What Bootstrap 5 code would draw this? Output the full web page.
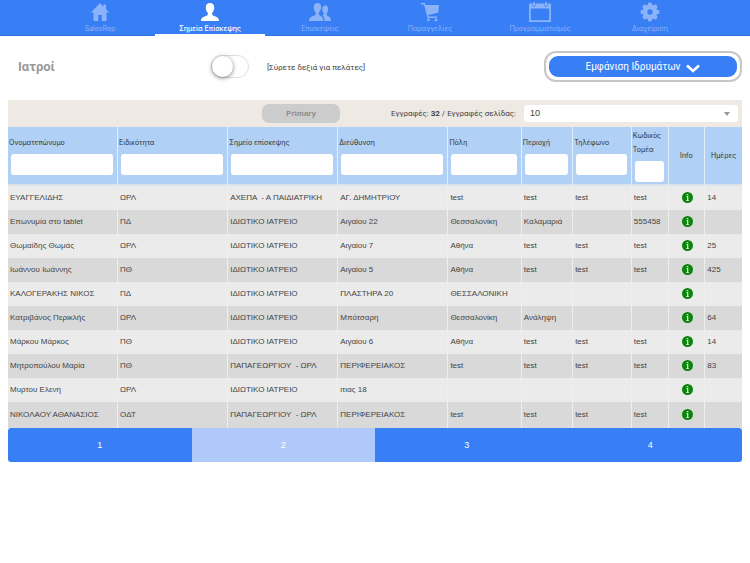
<!DOCTYPE html>
<html lang="el">
<head>
<meta charset="utf-8">
<meta name="viewport" content="width=device-width, initial-scale=1">
<title>Σημεία Επίσκεψης</title>
<link href="https://cdn.jsdelivr.net/npm/bootstrap@5.3.0/dist/css/bootstrap.min.css" rel="stylesheet">
<style>
:root { --brand: #387ef5; --brand-soft: #afc9fa; }
body { font-family: "Liberation Sans", Arial, sans-serif; font-size: 8px; line-height: 12px; color: #444; background: #fff; }
.tabs-bar { background: var(--brand); padding: 0 6%; border-bottom: 1px solid #3272dd; }
.tab-item { flex: 1 1 0; height: 36px; margin-bottom: -1px; padding-top: 2px; color: #8bb3f9; text-decoration: none; font-family: Inter, sans-serif; font-size: 7px; line-height: 10px; white-space: nowrap; border-bottom: 2px solid transparent; }
.tab-item svg { width: 22px; height: 20px; fill: currentColor; margin-bottom: 2px; }
.tab-item.active { color: #fff; font-weight: 500; border-color: #fff; }
.head-row { padding: 15px 4px 0 18px; height: 64px; }
.page-title { font-family: Roboto, sans-serif; font-size: 13px; line-height: 18px; font-weight: 700; color: #999; width: 193px; }
.switch-box.form-check-input { width: 38px; height: 23px; margin: 0; border: 1px solid #ddd; background-color: #fff; background-image: none; position: relative; box-shadow: none; border-radius: 12px; appearance: none; }
.switch-box::before { content: ""; display: block; width: 21px; height: 21px; border-radius: 50%; background: #fff; box-shadow: 0 1px 4px rgba(0,0,0,.5); transition: margin .2s; }
.switch-box:checked::before { margin-left: 15px; }
.switch-label { font-family: Roboto, sans-serif; font-size: 8px; line-height: 14px; margin: 2px 0 0 18px; }
.show-btn { width: 198px; height: 31px; border: 2px solid #c9c5c5; border-radius: 12px; padding: 3px; background: #fff; }
.show-btn span { height: 21px; background: var(--brand); border-radius: 9px; color: #fff; font-family: Roboto, sans-serif; font-size: 10px; font-weight: 400; line-height: 25px; gap: 6px; }
.show-btn svg { width: 14px; height: 9px; margin-top: 4px; }
.toolbar-row { background: #eee9e3; height: 27px; padding: 0 4px 0 254px; }
.primary-btn { width: 78px; height: 19px; border: 0; border-radius: 7px; background: #ccc; color: #8c8c8c; font-size: 8px; font-weight: 700; }
.count-label { font-family: Roboto, sans-serif; font-size: 8px; }
.size-select.form-select { width: 214px; height: 17px; min-height: 0; padding: 0 6px; border: 0; border-radius: 3px; font-size: 9px; line-height: 17px; color: #444; background: #fff url("data:image/svg+xml,%3Csvg xmlns='http://www.w3.org/2000/svg' viewBox='0 0 6 4'%3E%3Cpath d='M0 0h6L3 4z' fill='%23999'/%3E%3C/svg%3E") no-repeat right 8px center / 6px 4px; }
.grid-table { table-layout: fixed; width: 100%; margin: 0; border-collapse: separate; border-spacing: 0; }
.grid-table th { background: #b0d1f5; font-family: Inter, sans-serif; font-weight: 400; font-size: 7px; line-height: 14px; height: 59px; padding: 0 3px 0 1px; color: #333; vertical-align: middle; border-right: 1px solid #e3eefa; border-bottom: 2px solid #dde3ea; }
.grid-table th:nth-child(n+9) { padding: 0; }
.grid-table th label { display: block; }
.input-wrap { padding: 4px 1px 0 2px; }
.grid-table th .form-control { height: 21px; min-height: 0; width: auto; min-width: 0; padding: 0 4px; border: 0; border-radius: 3px; font-size: 8px; }
.grid-table td { height: 24px; padding: 0 0 0 2px; vertical-align: middle; white-space: pre; border-right: 1px solid #eee; font-size: 8px; }
.grid-table tbody tr:nth-child(odd) { background: #ebebeb; }
.grid-table tbody tr:nth-child(even) { background: #d9d9d9; }
.grid-table tbody tr:last-child td { height: 26px; }
.grid-table th:last-child, .grid-table td:last-child { border-right: 0; }
.info-btn { border: 0; padding: 0; background: none; width: 11px; height: 11px; display: block; margin: 0 auto 2px; }
.info-btn svg { display: block; width: 11px; height: 11px; }
.pager { background: var(--brand); border-radius: 3px; overflow: hidden; }
.pager a { flex: 1 1 0; height: 34px; line-height: 35px; color: #fff; font-size: 9px; text-align: center; text-decoration: none; }
.pager a.current { background: var(--brand-soft); }
</style>
</head>
<body>
<svg class="d-none" aria-hidden="true">
  <symbol id="ico-info" viewBox="0 0 22 22"><circle cx="11" cy="11" r="11" fill="#0a850a"/><path fill="#fff" fill-opacity=".85" d="M9.600 3.800h3v2.800h-3zM8.800 8.200h3.800v7.800h1v1.800H8.600V16h1.400v-6H8.800z"/></symbol>
</svg>
<nav class="tabs-bar d-flex" aria-label="Κύρια πλοήγηση">
  <a class="tab-item d-flex flex-column align-items-center" href="#"><svg viewBox="0 0 22 20"><path d="M11 1 2 10.500h2.500V19h4.800v-6h3.400v6h4.800v-8.500H20l-3-3.200V2.500h-2.500v2.200z"/></svg>SalesRep</a>
  <a class="tab-item active d-flex flex-column align-items-center" href="#" aria-current="page"><svg viewBox="0 0 22 20"><path d="M11 1C8.300 1 6.800 2.700 6.800 5.500c0 2.500.9 4.300 2 5.300.3 1.500 0 2.400-1.300 3C4.500 15 2 15.200 2 19h18c0-3.800-2.500-4-5.500-5.200-1.300-.6-1.600-1.500-1.300-3 1.100-1 2-2.800 2-5.300C15.200 2.700 13.700 1 11 1z"/></svg>Σημεία Επίσκεψης</a>
  <a class="tab-item d-flex flex-column align-items-center" href="#"><svg viewBox="0 0 22 20"><path d="M8.500 1C6 1 4.800 2.600 4.800 5.200c0 2.400.8 4.200 1.800 5.200.3 1.500 0 2.500-1.300 3.100C2.500 14.700 0 15.300 0 19h14.300c0-3.700-1.600-4.500-3.400-5.500-1.100-.6-1.300-1.600-1-3.100 1-1 2.300-2.800 2.300-5.200C12.200 2.600 11 1 8.500 1z"/><path d="M16.200 3.500c-1.500 0-2.900.8-2.900 3.200 0 2 .6 3.500 1.500 4.400.2 1-.1 1.700-1.300 2.100 1.300 1 2 2.800 2 5.800H22c0-3-1.300-4-3-4.700-1.300-.6-1.500-1.700-1.200-3.200.9-.9 1.300-2.300 1.300-4.400 0-2.200-1.200-3.200-2.900-3.200z"/></svg>Επισκέψεις</a>
  <a class="tab-item d-flex flex-column align-items-center" href="#"><svg viewBox="0 0 22 20"><path d="M2 1h4l.8 2H20l-.8 7.800-10 2.300.5 1.400H18V16H8.500L5 2.500H2z"/><circle cx="9.500" cy="18" r="1.400"/><circle cx="17" cy="18" r="1.400"/></svg>Παραγγελίες</a>
  <a class="tab-item d-flex flex-column align-items-center" href="#"><svg viewBox="0 0 22 20"><path fill-rule="evenodd" d="M0 1.500h3.500v1.800a1.500 1.500 0 0 0 3 0V1.500h9v1.800a1.500 1.500 0 0 0 3 0V1.500H22V20H0zM1.800 6.500v11.700h18.400V6.500z"/><rect x="4" width="2" height="4" rx="1"/><rect x="16" width="2" height="4" rx="1"/></svg>Προγραμματισμός</a>
  <a class="tab-item d-flex flex-column align-items-center" href="#"><svg viewBox="0 0 22 20"><g transform="translate(11 10)"><path id="tooth" d="M-2.500-6-1.800-9.300h3.600L2.500-6z"/><use href="#tooth" transform="rotate(45)"/><use href="#tooth" transform="rotate(90)"/><use href="#tooth" transform="rotate(135)"/><use href="#tooth" transform="rotate(180)"/><use href="#tooth" transform="rotate(225)"/><use href="#tooth" transform="rotate(270)"/><use href="#tooth" transform="rotate(315)"/><path fill-rule="evenodd" d="M0-7.200A7.200 7.200 0 1 1 0 7.200 7.200 7.200 0 0 1 0-7.200zM0-2.700A2.700 2.700 0 1 0 0 2.700 2.700 2.700 0 0 0 0-2.700z"/></g></svg>Διαχείριση</a>
</nav>
<main>
  <div class="head-row d-flex align-items-start">
    <div class="d-flex align-items-center flex-grow-1 pt-1">
      <h1 class="page-title m-0">Ιατροί</h1>
      <input class="form-check-input switch-box" type="checkbox" role="switch" id="customers">
      <label class="switch-label" for="customers">[Σύρετε δεξιά για πελάτες]</label>
    </div>
    <button type="button" class="show-btn me-1"><span class="d-flex align-items-center justify-content-center">Εμφάνιση Ιδρυμάτων <svg viewBox="0 0 14 9" fill="none" stroke="#fff" stroke-width="2.600"><path d="m1 1.500 6 5.500 6-5.500"/></svg></span></button>
  </div>
  <div class="px-2">
    <div class="toolbar-row d-flex align-items-center justify-content-between">
      <button type="button" class="primary-btn">Primary</button>
      <div class="d-flex align-items-center gap-2"><label class="count-label" for="size">Εγγραφές: <b>32</b> / Εγγραφές σελίδας:</label>
      <select class="form-select size-select" id="size"><option>10</option><option>20</option><option>50</option></select></div>
    </div>
    <table class="grid-table">
      <colgroup><col style="width:15%"><col style="width:15%"><col style="width:15%"><col style="width:15%"><col style="width:10%"><col style="width:7%"><col style="width:8%"><col style="width:5%"><col style="width:5%"><col style="width:5%"></colgroup>
      <thead><tr id="heads"></tr></thead>
      <tbody id="rows"></tbody>
    </table>
    <nav class="pager d-flex" aria-label="Σελίδες"><a href="#">1</a><a href="#" class="current" aria-current="page">2</a><a href="#">3</a><a href="#">4</a></nav>
  </div>
</main>
<script src="https://cdn.jsdelivr.net/npm/bootstrap@5.3.0/dist/js/bootstrap.bundle.min.js"></script>
<script>
const heads = ['Ονοματεπώνυμο','Ειδικότητα','Σημείο επίσκεψης','Διεύθυνση','Πόλη','Περιοχή','Τηλέφωνο','Κωδικός Τομέα'];
document.getElementById('heads').innerHTML = heads.map((h, i) =>
  `<th scope="col"><label for="f${i}">${h}</label><div class="d-grid input-wrap"><input class="form-control" type="text" id="f${i}"></div></th>`).join('') +
  '<th scope="col" class="text-center">Info</th><th scope="col" class="text-center">Ημέρες</th>';
const rows = [
  ['ΕΥΑΓΓΕΛΙΔΗΣ','ΩΡΛ','ΑΧΕΠΑ  - Α ΠΑΙΔΙΑΤΡΙΚΗ','ΑΓ. ΔΗΜΗΤΡΙΟΥ','test','test','test','test','14'],
  ['Επωνυμία στο tablet','ΠΔ','ΙΔΙΩΤΙΚΟ ΙΑΤΡΕΙΟ','Αιγαίου 22','Θεσσαλονίκη','Καλαμαριά','','555458',''],
  ['Θωμαίδης Θωμάς','ΩΡΛ','ΙΔΙΩΤΙΚΟ ΙΑΤΡΕΙΟ','Αιγαίου 7','Αθήνα','test','test','test','25'],
  ['Ιωάννου Ιωάννης','ΠΘ','ΙΔΙΩΤΙΚΟ ΙΑΤΡΕΙΟ','Αιγαίου 5','Αθήνα','test','test','test','425'],
  ['ΚΑΛΟΓΕΡΑΚΗΣ ΝΙΚΟΣ','ΠΔ','ΙΔΙΩΤΙΚΟ ΙΑΤΡΕΙΟ','ΠΛΑΣΤΗΡΑ 20','ΘΕΣΣΑΛΟΝΙΚΗ','','','',''],
  ['Κατριβάνος Περικλής','ΩΡΛ','ΙΔΙΩΤΙΚΟ ΙΑΤΡΕΙΟ','Μπότσαρη','Θεσσαλονίκη','Ανάληψη','','','64'],
  ['Μάρκου Μάρκος','ΠΘ','ΙΔΙΩΤΙΚΟ ΙΑΤΡΕΙΟ','Αιγαίου 6','Αθήνα','test','test','test','14'],
  ['Μητροπούλου Μαρία','ΠΘ','ΠΑΠΑΓΕΩΡΓΙΟΥ  - ΩΡΛ','ΠΕΡΙΦΕΡΕΙΑΚΟΣ','test','test','test','test','83'],
  ['Μυρτου Ελενη','ΩΡΛ','ΙΔΙΩΤΙΚΟ ΙΑΤΡΕΙΟ','ιτιας 18','','','','',''],
  ['ΝΙΚΟΛΑΟΥ ΑΘΑΝΑΣΙΟΣ','ΟΔΤ','ΠΑΠΑΓΕΩΡΓΙΟΥ  - ΩΡΛ','ΠΕΡΙΦΕΡΕΙΑΚΟΣ','test','test','test','test','']
];
document.getElementById('rows').innerHTML = rows.map(r => '<tr>' +
  r.slice(0, 8).map(c => `<td>${c}</td>`).join('') +
  `<td><button type="button" class="info-btn" aria-label="Info"><svg><use href="#ico-info"/></svg></button></td><td>${r[8]}</td></tr>`).join('');
</script>
</body>
</html>
